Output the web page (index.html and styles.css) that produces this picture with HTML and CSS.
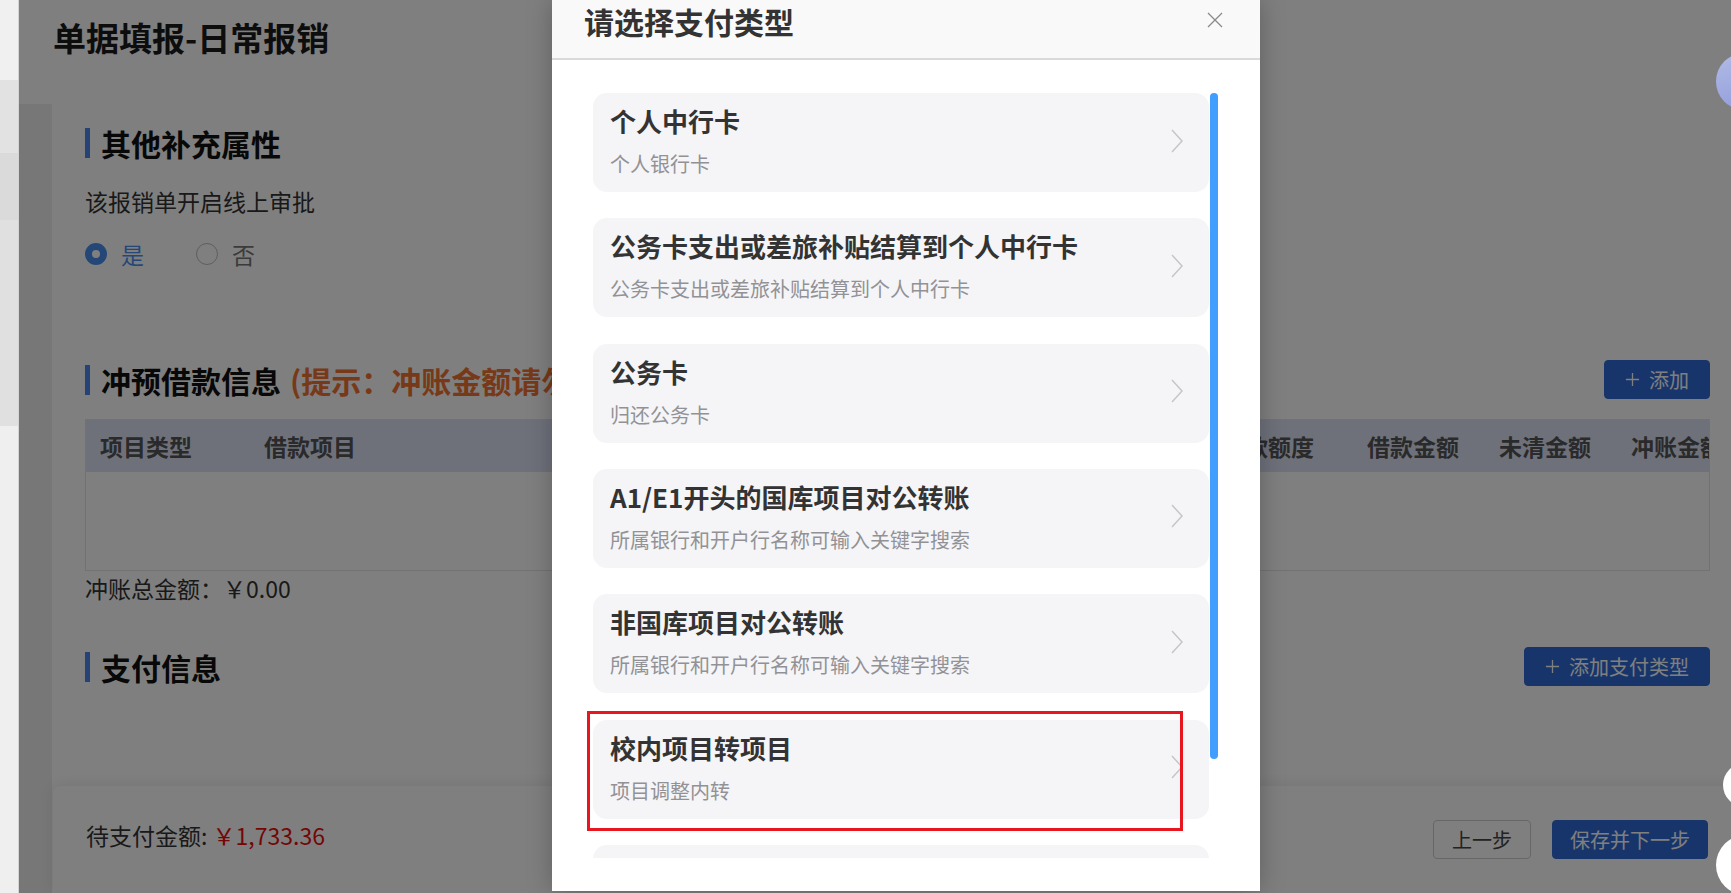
FILE: index.html
```html
<!DOCTYPE html>
<html lang="zh-CN">
<head>
    <meta charset="UTF-8">
    <title>单据填报-日常报销</title>
    <link rel="stylesheet" href="styles.css">
</head>
<body>
    <div class="app">
        <aside class="side-strip">
            <div class="strip strip-a"></div>
            <div class="strip strip-b"></div>
            <div class="strip strip-c"></div>
            <div class="strip strip-d"></div>
            <div class="strip strip-e"></div>
        </aside>

        <div class="frame">
            <div class="page">
                <header class="page-head">
                    <h1>单据填报-日常报销</h1>
                </header>

                <div class="page-body">
                    <div class="panel">
                        <div class="panel-main">
                            <section class="block">
                                <h2 class="block-title">其他补充属性</h2>
                                <p class="field-label">该报销单开启线上审批</p>
                                <div class="radio-group">
                                    <label class="radio checked"><span class="radio-dot"></span>是</label>
                                    <label class="radio"><span class="radio-dot"></span>否</label>
                                </div>
                            </section>

                            <section class="block">
                                <div class="block-head">
                                    <h2 class="block-title">冲预借款信息<span class="hint">(提示：冲账金额请勿大于未清金额)</span></h2>
                                    <button class="btn btn-primary">
                                        <svg class="plus" viewBox="0 0 16 16"><path d="M8 1v14M1 8h14"/></svg>
                                        添加
                                    </button>
                                </div>
                                <div class="table">
                                    <div class="table-head">
                                        <div class="th th-type">项目类型</div>
                                        <div class="th th-item">借款项目</div>
                                        <div class="th th-quota">可借款额度</div>
                                        <div class="th th-num">借款金额</div>
                                        <div class="th th-num">未清金额</div>
                                        <div class="th th-num">冲账金额</div>
                                    </div>
                                    <div class="table-body"></div>
                                </div>
                                <p class="total">冲账总金额：￥0.00</p>
                            </section>

                            <section class="block">
                                <div class="block-head block-head-pay">
                                    <h2 class="block-title">支付信息</h2>
                                    <button class="btn btn-primary">
                                        <svg class="plus" viewBox="0 0 16 16"><path d="M8 1v14M1 8h14"/></svg>
                                        添加支付类型
                                    </button>
                                </div>
                            </section>
                        </div>

                        <footer class="footer-bar">
                            <div class="pending">待支付金额: <span class="amount">￥1,733.36</span></div>
                            <div class="footer-actions">
                                <button class="btn btn-default">上一步</button>
                                <button class="btn btn-primary btn-next">保存并下一步</button>
                            </div>
                        </footer>
                    </div>
                </div>
            </div>

            <div class="mask"></div>

            <div class="dialog">
                <div class="dialog-head">
                    <h3>请选择支付类型</h3>
                    <svg class="close" viewBox="0 0 16 16"><path d="M1 1l14 14M15 1L1 15"/></svg>
                </div>
                <div class="dialog-body">
                    <div class="type-list">
                        <div class="type-card">
                            <div class="type-text">
                                <div class="type-name">个人中行卡</div>
                                <div class="type-desc">个人银行卡</div>
                            </div>
                            <svg class="arrow" viewBox="0 0 12 24"><polyline points="1,1 11,12 1,23"/></svg>
                        </div>
                        <div class="type-card">
                            <div class="type-text">
                                <div class="type-name">公务卡支出或差旅补贴结算到个人中行卡</div>
                                <div class="type-desc">公务卡支出或差旅补贴结算到个人中行卡</div>
                            </div>
                            <svg class="arrow" viewBox="0 0 12 24"><polyline points="1,1 11,12 1,23"/></svg>
                        </div>
                        <div class="type-card">
                            <div class="type-text">
                                <div class="type-name">公务卡</div>
                                <div class="type-desc">归还公务卡</div>
                            </div>
                            <svg class="arrow" viewBox="0 0 12 24"><polyline points="1,1 11,12 1,23"/></svg>
                        </div>
                        <div class="type-card">
                            <div class="type-text">
                                <div class="type-name">A1/E1开头的国库项目对公转账</div>
                                <div class="type-desc">所属银行和开户行名称可输入关键字搜索</div>
                            </div>
                            <svg class="arrow" viewBox="0 0 12 24"><polyline points="1,1 11,12 1,23"/></svg>
                        </div>
                        <div class="type-card">
                            <div class="type-text">
                                <div class="type-name">非国库项目对公转账</div>
                                <div class="type-desc">所属银行和开户行名称可输入关键字搜索</div>
                            </div>
                            <svg class="arrow" viewBox="0 0 12 24"><polyline points="1,1 11,12 1,23"/></svg>
                        </div>
                        <div class="type-card">
                            <div class="type-text">
                                <div class="type-name">校内项目转项目</div>
                                <div class="type-desc">项目调整内转</div>
                            </div>
                            <svg class="arrow" viewBox="0 0 12 24"><polyline points="1,1 11,12 1,23"/></svg>
                        </div>
                        <!-- next card is scrolled out of view -->
                        <div class="type-card"></div>
                    </div>
                    <div class="scroll-track">
                        <div class="scroll-thumb"></div>
                    </div>
                </div>
                <div class="mark-box"></div>
            </div>

            <div class="float-ball ball-top"></div>
            <div class="float-ball ball-mid"></div>
            <div class="float-ball ball-low"></div>
        </div>
    </div>
</body>
</html>
```

FILE: styles.css
```css
* {
    margin: 0;
    padding: 0;
    box-sizing: border-box;
    font-family: "Noto Sans CJK SC", "Noto Sans", sans-serif;
}

body {
    width: 1731px;
    height: 893px;
    overflow: hidden;
    background: #fff;
}

.app {
    display: flex;
    width: 1731px;
    height: 893px;
}

/* left strip, outside the dimmed frame */
.side-strip {
    width: 19px;
    flex-shrink: 0;
    display: flex;
    flex-direction: column;
    border-right: 1px solid #d4d4d4;
}

.strip-a { height: 80px; background: #f0f0f0; }
.strip-b { height: 73px; background: #e2e2e2; }
.strip-c { height: 67px; background: #dadada; }
.strip-d { height: 206px; background: #e0e0e0; }
.strip-e { flex: 1; background: #efefef; }

.frame {
    position: relative;
    flex: 1;
    overflow: hidden;
}

/* page under the mask */
.page {
    height: 100%;
    display: flex;
    flex-direction: column;
}

.page-head {
    height: 104px;
    padding: 14px 0 0 34px;
    background: #fff;
}

.page-head h1 {
    font-size: 33px;
    line-height: 46px;
    font-weight: 700;
    color: #1a1a1a;
}

.page-body {
    flex: 1;
    background: #eeeeee;
    padding-left: 33px;
}

.panel {
    height: 100%;
    background: #fff;
    display: flex;
    flex-direction: column;
}

.panel-main {
    flex: 1;
    padding: 24px 21px 0 33px;
}

.block-title {
    border-left: 5px solid #4a86ee;
    padding-left: 11px;
    font-size: 30px;
    line-height: 30px;
    font-weight: 700;
    color: #111;
}

.hint {
    margin-left: 9px;
    color: #f07232;
}

.field-label {
    margin-top: 27px;
    font-size: 23px;
    line-height: 32px;
    color: #333;
}

.radio-group {
    margin-top: 21px;
    display: flex;
    align-items: center;
}

.radio {
    display: flex;
    align-items: center;
    gap: 14px;
    margin-right: 52px;
    font-size: 23px;
    line-height: 32px;
    color: #777;
}

.radio-dot {
    width: 22px;
    height: 22px;
    border-radius: 50%;
    border: 1px solid #b8bcc4;
    background: #fff;
}

.radio.checked {
    color: #4a8ff0;
}

.radio.checked .radio-dot {
    border: 7px solid #4a8ff0;
    background: #fff;
}

.block-head {
    margin-top: 90px;
    display: flex;
    align-items: center;
    justify-content: space-between;
}

.block-head-pay {
    margin-top: 43px;
}

.btn {
    height: 39px;
    display: inline-flex;
    align-items: center;
    gap: 9px;
    padding: 0 20px;
    border-radius: 4px;
    font-size: 20px;
    border: 1px solid transparent;
    cursor: pointer;
}

.btn-primary {
    background: #2f6ad6;
    border-color: #2f6ad6;
    color: #fff;
}

.btn-default {
    background: #fff;
    border-color: #cfcfcf;
    color: #444;
    padding: 0 18px;
}

.btn-next {
    padding: 0 17px;
}

.plus {
    width: 15px;
    height: 15px;
    fill: none;
    stroke: #fff;
    stroke-width: 1.4;
}

.table {
    margin-top: 20px;
    border: 1px solid #e4e4e4;
    overflow: hidden;
}

.table-head {
    display: flex;
    height: 52px;
    background: #dde3f5;
}

.th {
    flex-shrink: 0;
    padding-left: 14px;
    font-size: 23px;
    line-height: 52px;
    font-weight: 700;
    color: #555;
    white-space: nowrap;
}

.th-type { width: 164px; }
.th-item { width: 934px; }
.th-quota { width: 168px; padding-left: 15px; }
.th-num { width: 132px; padding-left: 15px; }

.table-body {
    height: 98px;
    background: #fff;
}

.total {
    margin-top: 1px;
    font-size: 23px;
    line-height: 32px;
    color: #333;
}

.footer-bar {
    height: 107px;
    margin-left: 1px;
    padding: 0 23px 0 33px;
    display: flex;
    align-items: center;
    justify-content: space-between;
    background: #fff;
    border-radius: 8px 0 0 0;
    box-shadow: 0 -2px 14px rgba(0, 0, 0, 0.08);
}

.pending {
    margin-top: -10px;
    font-size: 23px;
    line-height: 32px;
    color: #333;
}

.amount {
    color: #e80d0d;
}

.footer-actions {
    display: flex;
    gap: 21px;
}

.mask {
    position: absolute;
    inset: 0;
    background: rgba(0, 0, 0, 0.5);
}

/* payment type dialog */
.dialog {
    position: absolute;
    left: 533px;
    top: 0;
    width: 708px;
    height: 891px;
    background: #fff;
    display: flex;
    flex-direction: column;
    box-shadow: 0 0 24px rgba(0, 0, 0, 0.25);
}

.dialog-head {
    height: 60px;
    flex-shrink: 0;
    padding: 0 37px 0 32px;
    display: flex;
    justify-content: space-between;
    align-items: flex-start;
    background: #f9f9f9;
    border-bottom: 2px solid #dadada;
}

.dialog-head h3 {
    font-size: 30px;
    line-height: 42px;
    font-weight: 700;
    color: #333;
}

.close {
    width: 16px;
    height: 16px;
    margin-top: 12px;
    fill: none;
    stroke: #8a8a8a;
    stroke-width: 1.3;
}

.dialog-body {
    flex: 1;
    padding: 33px 42px 33px 41px;
    display: flex;
    overflow: hidden;
}

.type-list {
    width: 617px;
    height: 765px;
    overflow: hidden;
}

.type-card {
    height: 99px;
    width: 616px;
    margin-bottom: 26.33px;
    padding: 10px 26px 14px 17px;
    display: flex;
    align-items: center;
    background: #f5f5f7;
    border-radius: 14px;
}

.type-text {
    flex: 1;
    align-self: flex-start;
}

.type-name {
    font-size: 26px;
    line-height: 36px;
    font-weight: 700;
    color: #333;
}

.type-desc {
    margin-top: 11px;
    font-size: 20px;
    line-height: 28px;
    color: #929296;
}

.arrow {
    width: 12px;
    height: 24px;
    fill: none;
    stroke: #c6c6c8;
    stroke-width: 1.5;
}

.scroll-track {
    width: 8px;
    height: 765px;
}

.scroll-thumb {
    height: 666px;
    background: #409eff;
    border-radius: 4px;
}

/* red annotation frame */
.mark-box {
    position: absolute;
    left: 35px;
    top: 711px;
    width: 596px;
    height: 120px;
    border: 3px solid #e8161f;
    pointer-events: none;
}

/* floating buttons at the right edge */
.float-ball {
    position: absolute;
    border-radius: 50%;
    background: #fff;
}

.ball-top {
    left: 1697px;
    top: 53px;
    width: 57px;
    height: 57px;
    background: linear-gradient(160deg, #b2bbe6, #8e9ad9);
}

.ball-mid {
    left: 1704px;
    top: 763px;
    width: 44px;
    height: 44px;
}

.ball-low {
    left: 1697px;
    top: 835px;
    width: 60px;
    height: 60px;
}
```
